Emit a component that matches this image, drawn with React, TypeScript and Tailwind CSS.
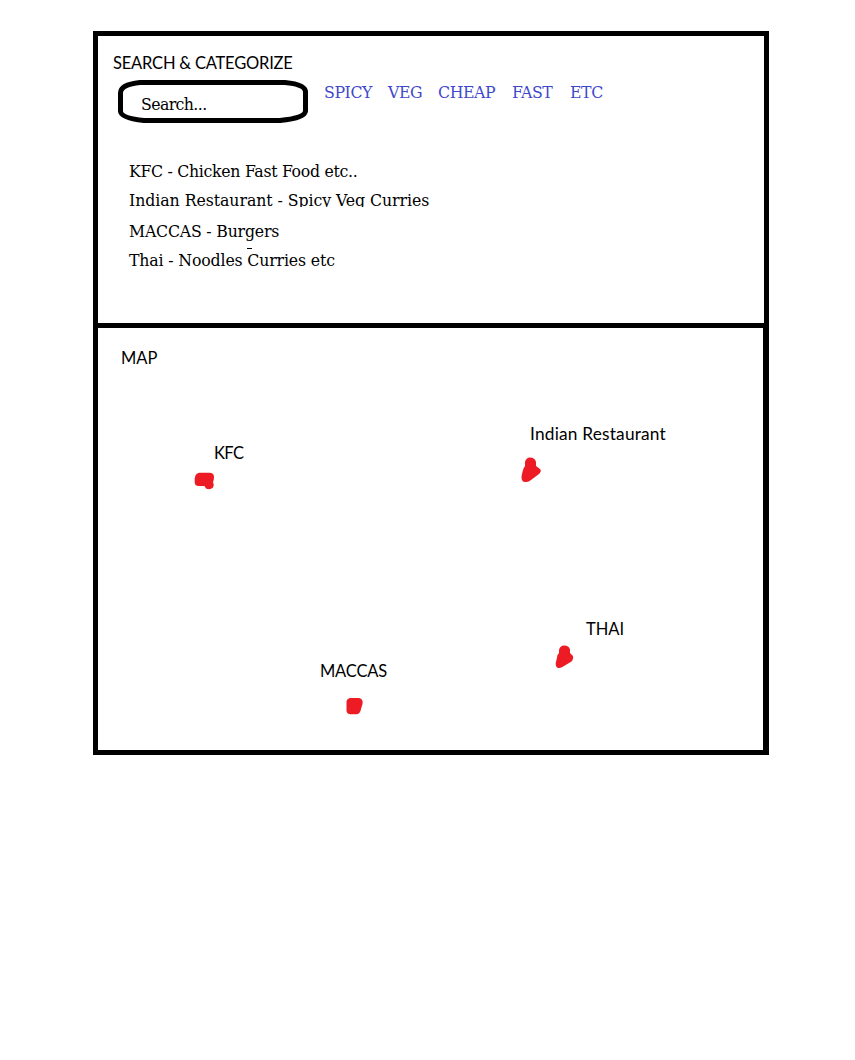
const serif = 'font-["DejaVu_Serif_Condensed","DejaVu_Serif",serif] [font-stretch:condensed] whitespace-nowrap leading-[22px] text-[17.5px] ';
const sans = 'font-["Lato",sans-serif] whitespace-nowrap leading-6 ';

const categories = [
  { name: "SPICY", style: "w-16" },
  { name: "VEG", style: "w-[50px]" },
  { name: "CHEAP", style: "w-[74px]" },
  { name: "FAST", style: "w-[58px]" },
  { name: "ETC", style: "" },
];

const places = [
  { text: "KFC - Chicken Fast Food etc..", style: "h-[29px] tracking-[-0.3px]" },
  { text: "Indian Restaurant - Spicy Veg Curries", style: "h-[18px] mb-[13px] overflow-hidden tracking-[-0.05px]" },
  { text: "MACCAS - Burgers", style: "h-[21px] overflow-hidden tracking-[-0.2px]" },
];

const pins = [
  { name: "KFC", label: "left-[116px] top-[113px] text-[16.5px] tracking-[-0.6px]", mark: "left-[96px] top-[144px]", d: "M5 0.7H16Q20 1 20 5Q20 8 19 10Q20.5 13 19 15.5Q16 18.5 12 16.5L10.5 14H4Q0.5 13.5 0.7 9.5Q0 2 5 0.7Z" },
  { name: "Indian Restaurant", label: "left-[432px] top-[94px] text-[17.3px] tracking-[0.2px]", mark: "left-[423px] top-[129px]", d: "M4 5Q5 0.5 9 0.5Q14 0.5 15 5V9L19 12Q21 14 18 17L10 23Q7 26 2 24.5Q-0.5 22 1 17L2 13Q2.5 11 4 9Z" },
  { name: "THAI", label: "left-[488px] top-[289px] text-[16.5px]", mark: "left-[458px] top-[317px]", d: "M3 5Q4 0.5 8 0.5Q13 0.5 14 4.5V8L17 11Q18 16 13 18L8 21Q4 24 1 22.5Q-1.5 20 0.5 15L1.5 10L3 8Z" },
  { name: "MACCAS", label: "left-[222px] top-[331px] text-[16.5px] tracking-[-0.2px]", mark: "left-[248px] top-[369px]", d: "M4 1H13Q17.5 2 16.5 7L15 12Q14 18 9 17.2H4Q0 17 0.5 12V6Q0 2 4 1Z" },
];

export default function App() {
  return (
    <div className="h-[1060px] bg-white pt-[31px] pl-[93px] text-black">
      <main className="flex h-[724px] w-[676px] flex-col border-[5px] border-black">
        <section className="h-[292px] border-b-[5px] border-black pt-[15px]">
          <h1 className={sans + "pl-[15px] text-[16.5px] tracking-[-0.2px]"}>SEARCH &amp; CATEGORIZE</h1>
          <div className="flex h-[48px] items-start pl-5">
            <div className="relative mt-[5px] h-[43px] w-[190px] shrink-0">
              <svg className="absolute inset-0" width="190" height="43" fill="none">
                <path d="M22 2.5H167Q187.5 4.5 187.5 12V31Q187 38 162 40.5H26Q2.5 38 2.5 31V13Q2.5 4.5 22 2.5Z" stroke="black" strokeWidth="5" strokeLinejoin="round" />
              </svg>
              <div className={serif + "relative pt-[13px] pl-[23px] tracking-[-0.6px]"}>Search...</div>
            </div>
            <nav className="flex pt-[6px] pl-4 text-[#3f48cc]">
              {categories.map((c) => (
                <span key={c.name} className={serif + "tracking-[-0.4px] " + c.style}>{c.name}</span>
              ))}
            </nav>
          </div>
          <div className="flex flex-col items-start pt-[37px] pl-[31px]">
            {places.map((p) => (
              <div key={p.text} className={serif + p.style}>{p.text}</div>
            ))}
            <div className="mt-[7px] ml-[118px] h-px w-[5px] bg-black" />
            <div className={serif + "tracking-[-0.15px]"}>Thai - Noodles Curries etc</div>
          </div>
        </section>
        <section className="relative h-[422px] border-r border-black pt-[18px] pl-[23px]">
          <h2 className={sans + "text-[16.5px]"}>MAP</h2>
          {pins.map((p) => (
            <div key={p.name}>
              <span className={sans + "absolute " + p.label}>{p.name}</span>
              <svg className={"absolute overflow-visible " + p.mark} width="22" height="26">
                <path d={p.d} fill="#ed1c24" />
              </svg>
            </div>
          ))}
        </section>
      </main>
    </div>
  );
}
